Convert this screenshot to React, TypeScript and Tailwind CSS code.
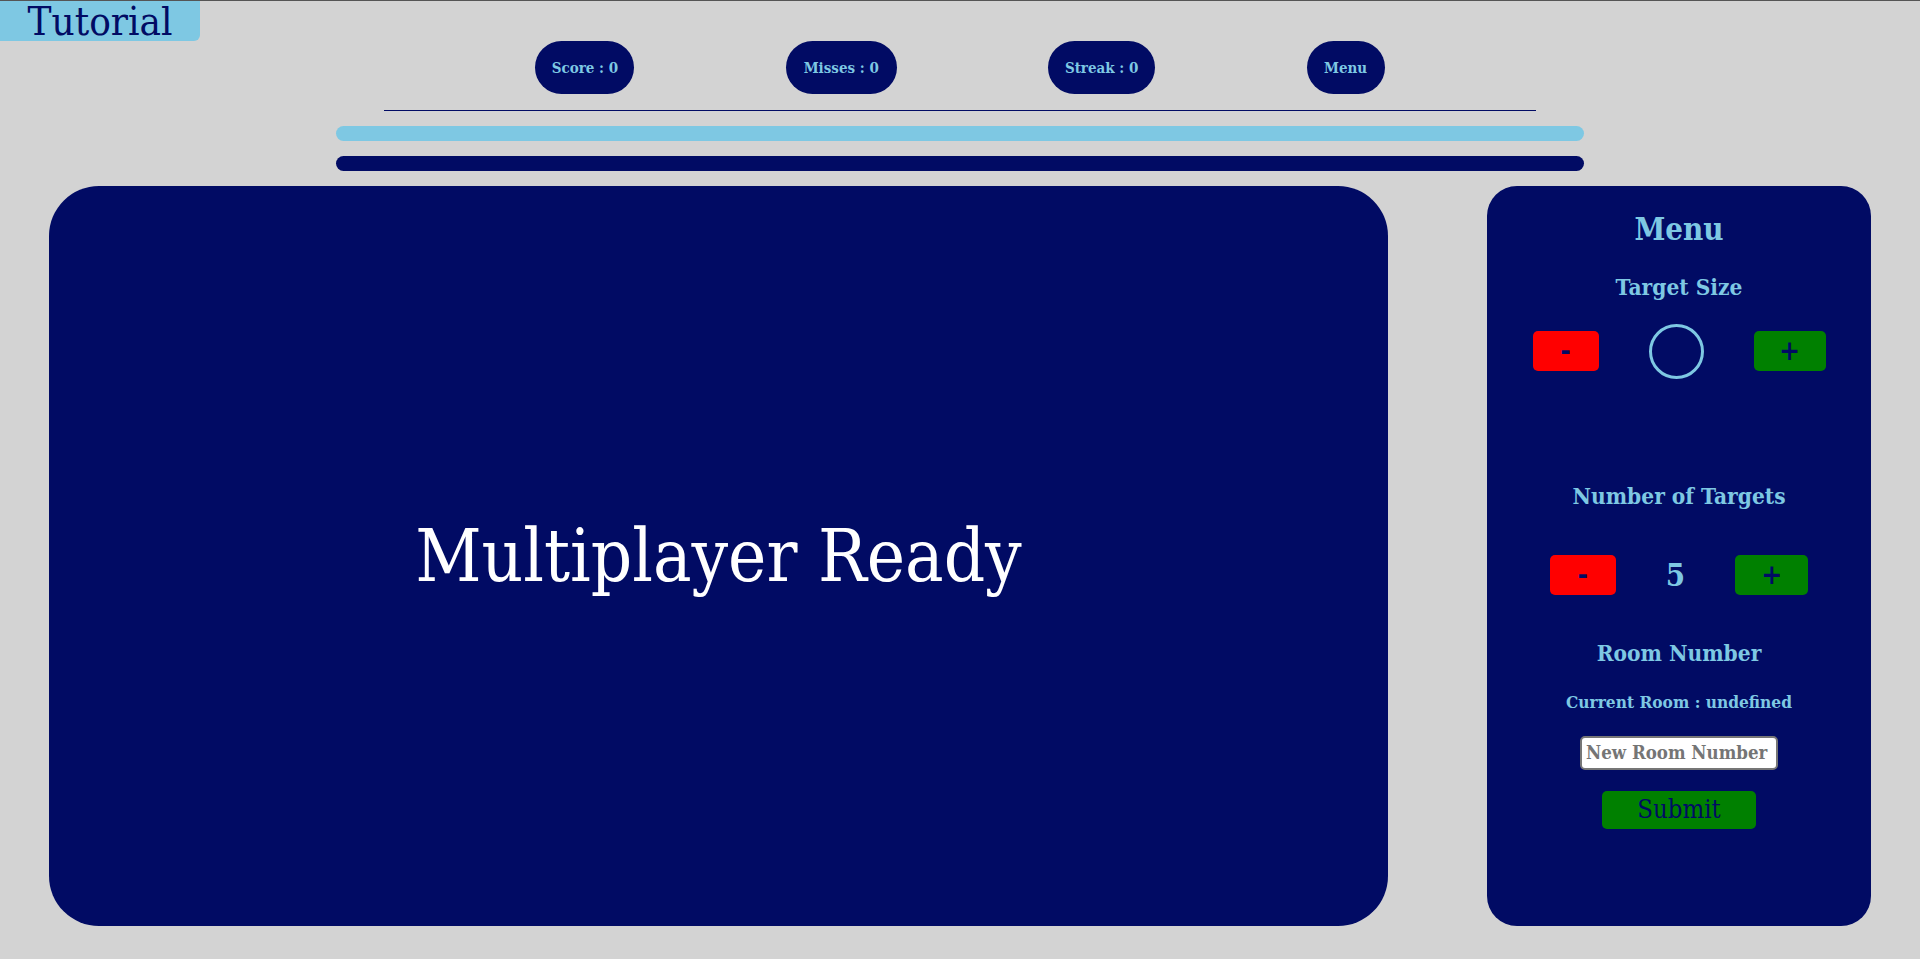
export default function App() {
  return (
    <div className="min-h-[959px] w-full bg-[#d3d3d3] border-t border-[#555555] font-['DejaVu_Serif_Condensed','DejaVu_Serif',serif]">
      <div className="w-[200px] h-[40px] bg-[#7ec8e3] rounded-br-[6px] flex items-center justify-center text-[40px] leading-none text-[#010b64]">
        Tutorial
      </div>

      <nav className="w-[1152px] mx-auto flex justify-evenly pb-4 border-b border-[#010b64]">
        <div className="w-[99px] h-[53px] pt-[2px] rounded-full bg-[#010b64] text-[#7ec8e3] text-[15px] font-bold flex items-center justify-center">
          Score : 0
        </div>
        <div className="w-[111px] h-[53px] pt-[2px] rounded-full bg-[#010b64] text-[#7ec8e3] text-[15px] font-bold flex items-center justify-center">
          Misses : 0
        </div>
        <div className="w-[107px] h-[53px] pt-[2px] rounded-full bg-[#010b64] text-[#7ec8e3] text-[15px] font-bold flex items-center justify-center">
          Streak : 0
        </div>
        <button className="w-[78px] h-[53px] pt-[2px] rounded-full bg-[#010b64] text-[#7ec8e3] text-[15px] font-bold flex items-center justify-center">
          Menu
        </button>
      </nav>

      <div className="w-[1248px] h-[15px] mx-auto mt-[15px] rounded-full bg-[#7ec8e3]" />
      <div className="w-[1248px] h-[15px] mx-auto mt-[15px] rounded-full bg-[#010b64]" />

      <div className="mt-[15px] flex justify-between px-[49px]">
        <main className="w-[1339px] h-[740px] rounded-[50px] bg-[#010b64] flex items-center justify-center">
          <h1 className="text-white text-[72px] leading-none">Multiplayer Ready</h1>
        </main>

        <aside className="w-[384px] h-[740px] rounded-[30px] bg-[#010b64] text-[#7ec8e3] flex flex-col items-center pt-[28px]">
          <h2 className="text-[31px] font-bold leading-none">Menu</h2>
          <h3 className="mt-[31px] text-[22.5px] font-bold leading-none">Target Size</h3>
          <div className="mt-[25px] flex items-center gap-[50px]">
            <button className="w-[66px] h-[40px] rounded-[5px] bg-[#ff0000] text-[#010b64] text-[28px] font-bold leading-none">-</button>
            <div className="w-[55px] h-[55px] rounded-full border-[3px] border-[#7ec8e3]" />
            <button className="w-[72px] h-[40px] rounded-[5px] bg-[#008000] text-[#010b64] text-[28px] font-bold leading-none">+</button>
          </div>

          <h3 className="mt-[106px] text-[22.5px] font-bold leading-none">Number of Targets</h3>
          <div className="mt-[48px] flex items-center gap-[50px]">
            <button className="w-[66px] h-[40px] rounded-[5px] bg-[#ff0000] text-[#010b64] text-[28px] font-bold leading-none">-</button>
            <span className="text-[31px] font-bold leading-none">5</span>
            <button className="w-[73px] h-[40px] rounded-[5px] bg-[#008000] text-[#010b64] text-[28px] font-bold leading-none">+</button>
          </div>

          <h3 className="mt-[47px] text-[22.5px] font-bold leading-none">Room Number</h3>
          <p className="mt-[29px] text-[17.2px] font-bold leading-none">Current Room : undefined</p>
          <input
            type="text"
            placeholder="New Room Number"
            className="mt-[25px] w-[198px] h-[34px] rounded-[5px] border-2 border-[#767676] bg-white px-[4px] text-[18.5px] font-bold text-black placeholder:text-[#757575] outline-none"
          />
          <button className="mt-[21px] w-[154px] h-[38px] rounded-[5px] bg-[#008000] text-[#010b64] text-[25.5px] leading-none">
            Submit
          </button>
        </aside>
      </div>
    </div>
  );
}
